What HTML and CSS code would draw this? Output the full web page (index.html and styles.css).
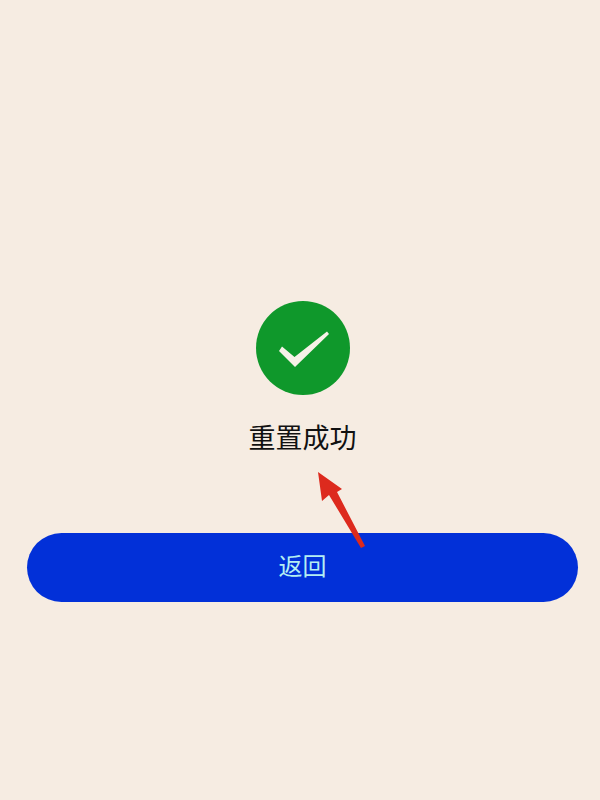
FILE: index.html
```html
<!DOCTYPE html>
<html>
    <head>
        <meta charset="utf-8">
        <title>重置成功</title>
        <link rel="stylesheet" href="styles.css">
    </head>
    <body>
        <div class="page">
            <svg class="ok_icon" viewBox="0 0 94 94">
                <circle cx="47" cy="47" r="47" fill="#0f982b"/>
                <path d="M26 45.5 L38.5 56 L71 30.5 L73 33 L39 66 L23 50 Z" fill="#f7f1e8"/>
            </svg>
            <div class="title">重置成功</div>
            <div class="back_btn">返回</div>
            <svg class="arrow" viewBox="0 0 60 90">
                <path d="M3 2 L27 19 L22 22 L50 76 L46 78 L14 25 L7 31 Z" fill="#dd2a1e"/>
            </svg>
        </div>
    </body>
</html>
```

FILE: styles.css
```css
body {
    margin:0;
    background:#f6ece2;
    font-family:"Noto Sans CJK SC", "Liberation Sans", sans-serif;
}
.page {
    position:relative;
    height:800px;
    padding-top:301px;
    box-sizing:border-box;
    display:flex;
    flex-direction:column;
    align-items:center;
}
.ok_icon {
    width:94px;
    height:94px;
    margin-left:5px;
}
.title {
    margin-top:22px;
    margin-left:5px;
    height:40px;
    line-height:40px;
    font-size:27px;
    color:#111;
}
.back_btn {
    margin-top:76px;
    margin-left:5px;
    width:551px;
    height:69px;
    line-height:64px;
    border-radius:35px;
    background:#0230d8;
    color:#b4eef2;
    font-size:24px;
    text-align:center;
}
.arrow {
    position:absolute;
    left:315px;
    top:470px;
    width:60px;
    height:90px;
}
```
